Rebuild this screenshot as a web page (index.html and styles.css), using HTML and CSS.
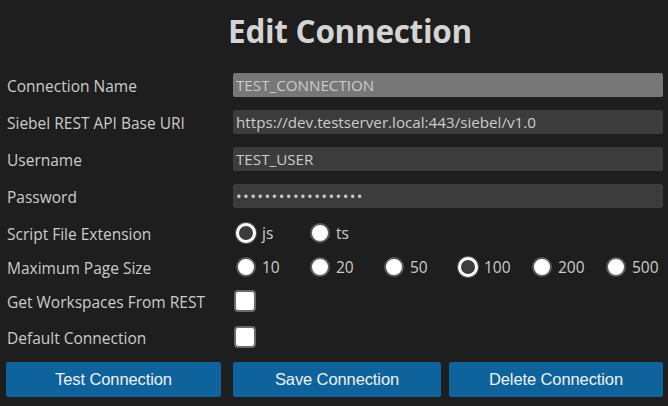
FILE: index.html
```html
<!DOCTYPE html>
<html>
<head>
<meta charset="utf-8">
<link rel="stylesheet" href="styles.css">
</head>
<body>
<h1 class="title">Edit Connection</h1>
<form class="form">
  <label class="label row-text">Connection Name</label>
  <div class="field row-text"><input class="input input-disabled" type="text" value="TEST_CONNECTION"></div>

  <label class="label row-text">Siebel REST API Base URI</label>
  <div class="field row-text"><input class="input" type="text" value="https://dev.testserver.local:443/siebel/v1.0"></div>

  <label class="label row-text">Username</label>
  <div class="field row-text"><input class="input" type="text" value="TEST_USER"></div>

  <label class="label row-text">Password</label>
  <div class="field row-text"><input class="input input-password" type="password" value="xxxxxxxxxxxxxxxxxx"></div>

  <label class="label row-radio">Script File Extension</label>
  <div class="field row-radio radios">
    <label class="opt"><input class="radio" type="radio" name="ext" checked><span>js</span></label>
    <label class="opt"><input class="radio" type="radio" name="ext"><span>ts</span></label>
  </div>

  <label class="label row-radio">Maximum Page Size</label>
  <div class="field row-radio radios">
    <label class="opt"><input class="radio" type="radio" name="ps"><span>10</span></label>
    <label class="opt"><input class="radio" type="radio" name="ps"><span>20</span></label>
    <label class="opt"><input class="radio" type="radio" name="ps"><span>50</span></label>
    <label class="opt"><input class="radio" type="radio" name="ps" checked><span>100</span></label>
    <label class="opt"><input class="radio" type="radio" name="ps"><span>200</span></label>
    <label class="opt"><input class="radio" type="radio" name="ps"><span>500</span></label>
  </div>

  <label class="label row-check">Get Workspaces From REST</label>
  <div class="field row-check"><input class="check" type="checkbox"></div>

  <label class="label row-check-last">Default Connection</label>
  <div class="field row-check-last"><input class="check" type="checkbox"></div>

  <div class="btn-cell"><button type="button" class="btn btn-test">Test Connection</button></div>
  <div class="btn-cell btn-pair">
    <button type="button" class="btn btn-save">Save Connection</button>
    <button type="button" class="btn btn-delete">Delete Connection</button>
  </div>
</form>
</body>
</html>
```
FILE: styles.css
```css
html, body {
  margin: 0;
  padding: 0;
  background: #1e1e1e;
  color: #cccccc;
  font-family: "Open Sans", "Noto Sans", sans-serif;
}
body {
  padding: 0 5px 0 5px;
}
.title {
  margin: 0;
  padding: 9px 0 0 32px;
  height: 55px;
  box-sizing: border-box;
  text-align: center;
  font-size: 31.5px;
  font-weight: 700;
  line-height: 44px;
  color: #d4d4d4;
  letter-spacing: -0.3px;
}
.form {
  display: grid;
  grid-template-columns: 228px minmax(0, 1fr);
  margin-top: 18px;
}
.row-text { height: 37px; }
.row-radio { height: 34px; }
.row-check { height: 36px; }
.row-check-last { height: 37px; }
.label {
  box-sizing: border-box;
  padding: 1px 0 0 2px;
  font-size: 15.5px;
  line-height: 25px;
  color: #cccccc;
}
.field {
  display: flex;
  align-items: flex-start;
  min-width: 0;
}
.input {
  box-sizing: border-box;
  width: 100%;
  min-width: 0;
  height: 24px;
  border: none;
  border-radius: 2px;
  background: #3c3c3c;
  color: #cccccc;
  font-family: "Open Sans", "Noto Sans", sans-serif;
  font-size: 15.2px;
  padding: 0 3px;
  margin: 0;
  outline: none;
}
.input-password {
  letter-spacing: 1.4px;
}
.input-disabled {
  background: #777777;
}
.opt {
  display: flex;
  align-items: center;
  width: 74px;
  flex: none;
  height: 24px;
  font-size: 15.5px;
  color: #cccccc;
  padding-left: 3px;
  box-sizing: border-box;
}
.opt:last-child {
  width: auto;
}
.opt span {
  margin-left: 6px;
}
.radio {
  -webkit-appearance: none;
  appearance: none;
  margin: 0;
  width: 20px;
  height: 20px;
  border-radius: 50%;
  background: #ffffff;
  border: 2px solid #5a5a5a;
  box-sizing: border-box;
  flex: none;
}
.radio:checked {
  background: #3c3c3c;
  border: 3px solid #ffffff;
  box-shadow: 0 0 0 1px #5a5a5a;
}
.check {
  -webkit-appearance: none;
  appearance: none;
  margin: 1px 0 0 1px;
  width: 22px;
  height: 22px;
  border-radius: 4px;
  background: #ffffff;
  border: 2px solid #6a6a6a;
  box-sizing: border-box;
}
.btn-cell {
  display: flex;
}
.btn-pair {
  gap: 8px;
}
.btn {
  height: 35px;
  border: none;
  border-radius: 2px;
  background: #0e639c;
  color: #f0f0f0;
  font-family: "Liberation Sans", Arial, sans-serif;
  font-size: 16.5px;
  letter-spacing: -0.1px;
  padding: 0;
}
.btn-test { width: 215px; margin-left: 1px; }
.btn-save { width: 208px; }
.btn-delete { width: 214px; }
```
